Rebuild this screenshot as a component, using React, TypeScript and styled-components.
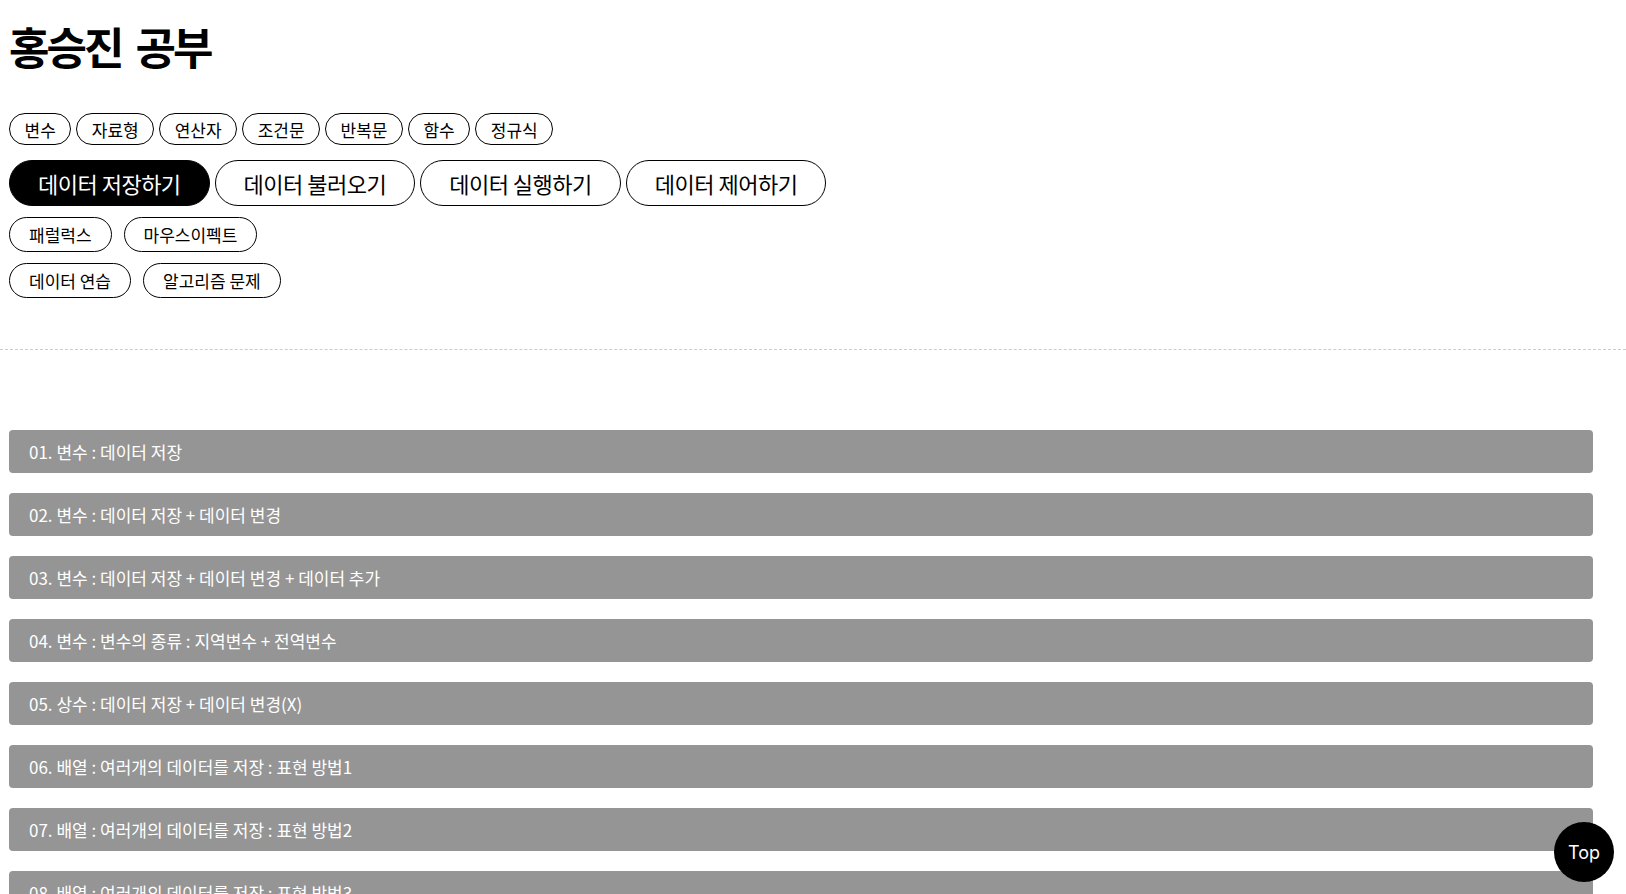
import React from "react";
import styled, { createGlobalStyle } from "styled-components";

const GlobalStyle = createGlobalStyle`
  * {
    box-sizing: border-box;
  }
  body {
    margin: 0;
    background: #ffffff;
    color: #000000;
    font-family: "Noto Sans CJK KR", "Noto Sans", sans-serif;
  }
`;

const Header = styled.header`
  display: flex;
  flex-direction: column;
  padding: 16px 8px 51px 9px;
  border-bottom: 1px dashed #cccccc;
`;

const Title = styled.h1`
  margin: 0 0 37px 0;
  font-size: 44px;
  line-height: 60px;
  font-weight: 700;
  letter-spacing: -3px;
  word-spacing: 7px;
`;

interface TagRowProps {
  gap: number;
  bottom: number;
}
const TagRow = styled.div<TagRowProps>`
  display: flex;
  flex-wrap: wrap;
  gap: ${(props) => props.gap}px;
  margin-bottom: ${(props) => props.bottom}px;
`;

type TagSize = "small" | "large" | "medium";

interface TagProps {
  size: TagSize;
  active?: boolean;
}
const sizes = {
  small: { height: 32, padding: 14.5, font: 17, spacing: 0 },
  large: { height: 46, padding: 28, font: 22, spacing: -0.5 },
  medium: { height: 35, padding: 19, font: 17, spacing: 0 }
};

const Tag = styled.a<TagProps>`
  display: inline-flex;
  align-items: center;
  justify-content: center;
  height: ${(props) => sizes[props.size].height}px;
  padding: 0 ${(props) => sizes[props.size].padding}px;
  border: 1px solid #000000;
  border-radius: 999px;
  font-size: ${(props) => sizes[props.size].font}px;
  letter-spacing: ${(props) => sizes[props.size].spacing}px;
  background: ${(props) => (props.active ? "#000000" : "#ffffff")};
  color: ${(props) => (props.active ? "#ffffff" : "#000000")};
  cursor: pointer;
  white-space: nowrap;
`;

const List = styled.ul`
  list-style: none;
  margin: 0;
  padding: 80px 33px 0 9px;
  display: flex;
  flex-direction: column;
  gap: 20px;
`;

const Item = styled.li`
  display: flex;
  align-items: center;
  height: 43px;
  padding-left: 20px;
  background: #959595;
  border-radius: 4px;
  color: #ffffff;
  font-size: 17px;
  cursor: pointer;
`;

const TopButton = styled.button`
  position: fixed;
  right: 12px;
  bottom: 12px;
  width: 60px;
  height: 60px;
  border: none;
  border-radius: 50%;
  background: #000000;
  color: #ffffff;
  font-family: "Inter", "Noto Sans", sans-serif;
  font-size: 18px;
  cursor: pointer;
`;

const basics = ["변수", "자료형", "연산자", "조건문", "반복문", "함수", "정규식"];
const dataTabs = ["데이터 저장하기", "데이터 불러오기", "데이터 실행하기", "데이터 제어하기"];
const effects = ["패럴럭스", "마우스이펙트"];
const practice = ["데이터 연습", "알고리즘 문제"];

const items = [
  "01. 변수 : 데이터 저장",
  "02. 변수 : 데이터 저장 + 데이터 변경",
  "03. 변수 : 데이터 저장 + 데이터 변경 + 데이터 추가",
  "04. 변수 : 변수의 종류 : 지역변수 + 전역변수",
  "05. 상수 : 데이터 저장 + 데이터 변경(X)",
  "06. 배열 : 여러개의 데이터를 저장 : 표현 방법1",
  "07. 배열 : 여러개의 데이터를 저장 : 표현 방법2",
  "08. 배열 : 여러개의 데이터를 저장 : 표현 방법3",
  "09. 배열 : 여러개의 데이터를 저장 : 표현 방법4",
  "10. 객체 : 데이터를 저장(키와 값) : 표현 방법1"
];

export default function App() {
  return (
    <>
      <GlobalStyle />
      <Header>
        <Title>홍승진 공부</Title>
        <TagRow gap={5} bottom={15}>
          {basics.map((t) => (
            <Tag key={t} size="small">
              {t}
            </Tag>
          ))}
        </TagRow>
        <TagRow gap={5} bottom={11}>
          {dataTabs.map((t, i) => (
            <Tag key={t} size="large" active={i === 0}>
              {t}
            </Tag>
          ))}
        </TagRow>
        <TagRow gap={12} bottom={11}>
          {effects.map((t) => (
            <Tag key={t} size="medium">
              {t}
            </Tag>
          ))}
        </TagRow>
        <TagRow gap={12} bottom={0}>
          {practice.map((t) => (
            <Tag key={t} size="medium">
              {t}
            </Tag>
          ))}
        </TagRow>
      </Header>
      <List>
        {items.map((t) => (
          <Item key={t}>{t}</Item>
        ))}
      </List>
      <TopButton>Top</TopButton>
    </>
  );
}
